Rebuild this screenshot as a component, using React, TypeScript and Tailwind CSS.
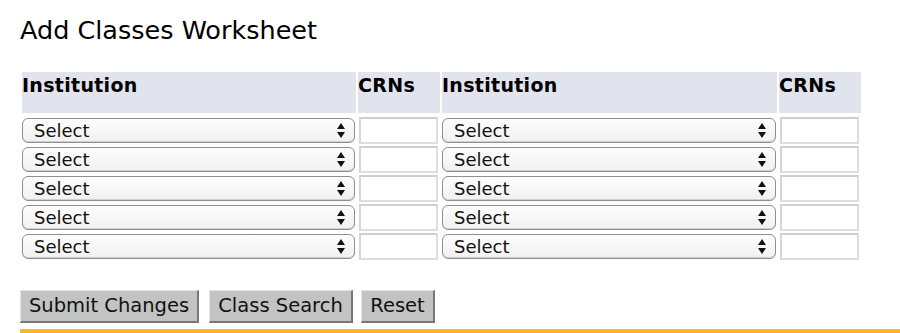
import React from "react";

const font = { fontFamily: '"DejaVu Sans", Verdana, sans-serif' };

function Arrows() {
  return (
    <svg width="8" height="15" viewBox="0 0 8 15" className="shrink-0">
      <polygon points="4,0 8,6 0,6" fill="#111" />
      <polygon points="0,9 8,9 4,15" fill="#111" />
    </svg>
  );
}

function FakeSelect() {
  return (
    <div className="mt-[3px] flex h-[25px] w-full items-center justify-between rounded-[6px] border border-[#8f8f8f] bg-gradient-to-b from-[#fdfdfd] to-[#f1f1f1] pl-[11px] pr-[9px] shadow-[inset_0_-1px_0_#d0d0d0]">
      <span className="text-[18px] leading-[21px] text-[#111]">Select</span>
      <Arrows />
    </div>
  );
}

function CrnInput() {
  return (
    <div className="ml-[1px] mt-[2px] h-[27px] w-[79px] border-2 border-[#dedede] border-t-[#cfcfcf] border-l-[#d6d6d6] bg-white" />
  );
}

export default function App() {
  const rows = [0, 1, 2, 3, 4];
  return (
    <div className="h-[333px] w-[900px] overflow-hidden bg-white text-black" style={font}>
      <h1 className="pl-[20px] pt-[16px] text-[25.5px] font-normal leading-[29px]">
        Add Classes Worksheet
      </h1>
      <div className="ml-[22px] mt-[27px] grid grid-cols-[334px_82px_335px_82px] gap-[2px]">
        <div className="h-[41px] bg-[#e1e3ed] pt-[2px] text-[19px] font-bold leading-[22px] tracking-[0.3px]">Institution</div>
        <div className="h-[41px] bg-[#e1e3ed] pt-[2px] text-[19px] font-bold leading-[22px] tracking-[0.3px]">CRNs</div>
        <div className="h-[41px] bg-[#e1e3ed] pt-[2px] text-[19px] font-bold leading-[22px] tracking-[0.3px]">Institution</div>
        <div className="h-[41px] bg-[#e1e3ed] pt-[2px] text-[19px] font-bold leading-[22px] tracking-[0.3px]">CRNs</div>
        {rows.map((r) => (
          <React.Fragment key={r}>
            <div className="h-[27px] pr-[1px]">
              <FakeSelect />
            </div>
            <div className="h-[27px]">
              <CrnInput />
            </div>
            <div className="h-[27px] pr-[1px]">
              <FakeSelect />
            </div>
            <div className="h-[27px]">
              <CrnInput />
            </div>
          </React.Fragment>
        ))}
      </div>
      <div className="ml-[20px] mt-[32px] flex items-start">
        <button className="h-[33px] w-[179px] border border-r-2 border-b-2 border-[#e2e2e2] border-r-[#777] border-b-[#777] bg-[#c3c3c3] text-[19.5px] leading-[22px] text-[#111]">
          Submit Changes
        </button>
        <button className="ml-[10px] h-[33px] w-[144px] border border-r-2 border-b-2 border-[#e2e2e2] border-r-[#777] border-b-[#777] bg-[#c3c3c3] text-[19.5px] leading-[22px] text-[#111]">
          Class Search
        </button>
        <button className="ml-[8px] h-[33px] w-[74px] border border-r-2 border-b-2 border-[#e2e2e2] border-r-[#777] border-b-[#777] bg-[#c3c3c3] text-[19.5px] leading-[22px] text-[#111]">
          Reset
        </button>
      </div>
      <div className="ml-[20px] mt-[6px] h-[5px] bg-[#fdb72e]" />
    </div>
  );
}
